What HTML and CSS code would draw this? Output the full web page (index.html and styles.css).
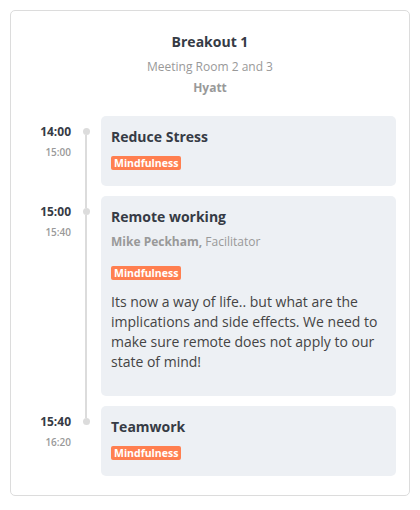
FILE: index.html
```html
<!DOCTYPE html>
<html>
<head>
<meta charset="utf-8">
<link rel="stylesheet" href="styles.css">
</head>
<body>
<div class="panel">
  <div class="header">
    <div class="title">Breakout 1</div>
    <div class="room">Meeting Room 2 and 3</div>
    <div class="venue">Hyatt</div>
  </div>
  <div class="timeline">
    <div class="row">
      <div class="time"><div class="start">14:00</div><div class="end">15:00</div></div>
      <div class="rail"><span class="dot"></span><span class="line"></span></div>
      <div class="event">
        <div class="ev-title">Reduce Stress</div>
        <span class="tag">Mindfulness</span>
      </div>
    </div>
    <div class="row">
      <div class="time"><div class="start">15:00</div><div class="end">15:40</div></div>
      <div class="rail"><span class="dot"></span><span class="line"></span></div>
      <div class="event">
        <div class="ev-title">Remote working</div>
        <div class="speaker"><b>Mike Peckham,</b> Facilitator</div>
        <span class="tag">Mindfulness</span>
        <p class="desc">Its now a way of life.. but what are the implications and side effects. We need to make sure remote does not apply to our state of mind!</p>
      </div>
    </div>
    <div class="row">
      <div class="time"><div class="start">15:40</div><div class="end">16:20</div></div>
      <div class="rail"><span class="dot"></span></div>
      <div class="event">
        <div class="ev-title">Teamwork</div>
        <span class="tag">Mindfulness</span>
      </div>
    </div>
  </div>
</div>
</body>
</html>
```
FILE: styles.css
```css
* { box-sizing: border-box; }
body {
  margin: 0;
  padding: 10px;
  background: #fff;
  font-family: "Open Sans", "Noto Sans", sans-serif;
  color: #363b45;
}
.panel {
  width: 400px;
  height: 486px;
  border: 1px solid #dcdcdc;
  border-radius: 5px;
  padding: 21px 13px 19px 0;
}
.header {
  text-align: center;
  padding-left: 13px;
}
.title {
  font-size: 14px;
  font-weight: 700;
  line-height: 20px;
  margin-bottom: 4px;
}
.room {
  font-size: 12px;
  line-height: 21px;
  color: #999;
}
.venue {
  font-size: 12px;
  line-height: 21px;
  color: #999;
  font-weight: 700;
}
.timeline {
  margin-top: 18px;
  display: flex;
  flex-direction: column;
  gap: 10px;
}
.row {
  display: grid;
  grid-template-columns: 60px 30px 1fr;
}
.time {
  text-align: right;
  padding-top: 6px;
}
.start {
  font-size: 12px;
  font-weight: 700;
  line-height: 20px;
}
.end {
  font-size: 10px;
  font-weight: 600;
  line-height: 20px;
  color: #999;
}
.rail {
  display: flex;
  flex-direction: column;
  align-items: center;
  padding-top: 12px;
}
.dot {
  width: 7px;
  height: 7px;
  border-radius: 50%;
  background: #dcdcdc;
  flex: none;
}
.line {
  flex: 1;
  width: 2px;
  background: #dcdcdc;
  margin-bottom: -22px;
}
.event {
  background: #edf0f4;
  border-radius: 5px;
  padding: 11px 10px 16px;
}
.ev-title {
  font-size: 14px;
  font-weight: 700;
  line-height: 20px;
  margin-bottom: 9px;
}
.tag {
  display: block;
  width: fit-content;
  background: #ff7f50;
  color: #fff;
  font-size: 10.5px;
  font-weight: 700;
  line-height: 14px;
  padding: 0 3px;
  border-radius: 2px;
}
.speaker {
  font-size: 12px;
  line-height: 18px;
  color: #999;
  margin-top: -3px;
  margin-bottom: 15px;
}
.speaker b { font-weight: 700; }
.desc {
  margin: 12px 0 8px;
  font-size: 14px;
  line-height: 20px;
  color: #444;
}
```
